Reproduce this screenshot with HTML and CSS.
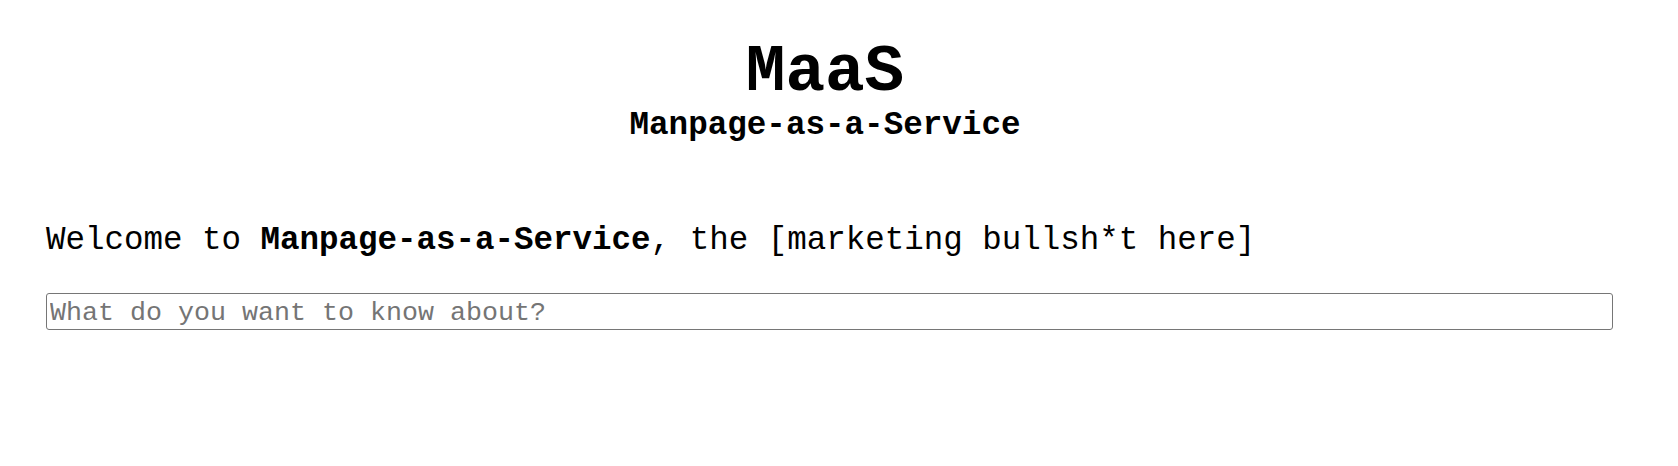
FILE: index.html
```html
<!DOCTYPE html>
<html lang="en">
<head>
<meta charset="utf-8">
<title>MaaS</title>
<link rel="stylesheet" href="styles.css">
</head>
<body>
<header class="masthead">
  <h1 class="title">MaaS</h1>
  <h2 class="subtitle">Manpage-as-a-Service</h2>
</header>
<main class="content">
  <p class="welcome">Welcome to <strong>Manpage-as-a-Service</strong>, the [marketing bullsh*t here]</p>
  <input class="search" type="text" placeholder="What do you want to know about?">
</main>
</body>
</html>
```

FILE: styles.css
```css
html, body {
  margin: 0;
  padding: 0;
  background: #ffffff;
}

body {
  font-family: "Liberation Mono", "DejaVu Sans Mono", monospace;
  color: #000000;
  width: 1678px;
}

.masthead {
  display: flex;
  flex-direction: column;
  align-items: center;
  padding: 38px 28px 0 0;
}

.title {
  margin: 0;
  font-size: 66px;
  line-height: 70px;
  font-weight: bold;
}

.subtitle {
  margin: 0;
  font-size: 32.6px;
  line-height: 36px;
  font-weight: bold;
}

.content {
  padding: 79px 65px 0 46px;
}

.welcome {
  margin: 0;
  font-size: 32.5px;
  line-height: 36px;
}

.welcome strong {
  font-weight: bold;
}

.search {
  display: block;
  box-sizing: border-box;
  width: 100%;
  height: 37px;
  margin: 34px 0 0;
  padding: 2px 3px 0;
  border: 1px solid #767676;
  border-radius: 3px;
  font-family: "Liberation Mono", "DejaVu Sans Mono", monospace;
  font-size: 26.67px;
  color: #000000;
  background: #ffffff;
  outline: none;
}

.search::placeholder {
  color: #757575;
  opacity: 1;
}
```
